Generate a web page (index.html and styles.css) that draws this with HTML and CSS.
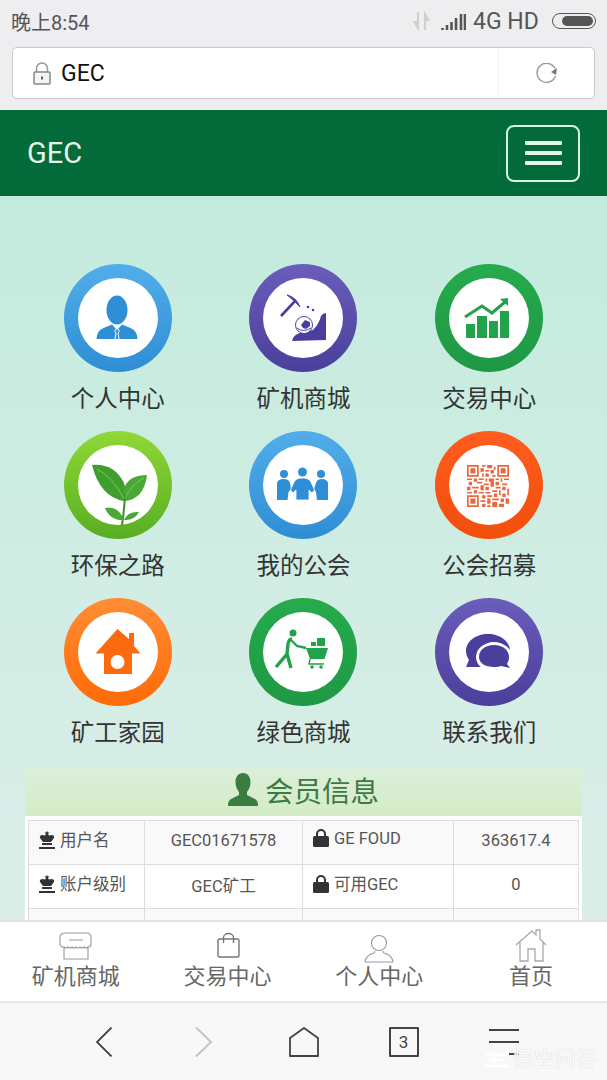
FILE: index.html
```html
<!DOCTYPE html>
<html lang="zh-CN">
<head>
  <meta charset="UTF-8">
  <meta name="viewport" content="width=device-width, initial-scale=1.0">
  <title>GEC</title>
  <link rel="stylesheet" href="styles.css">
</head>
<body>
  <div class="phone">
    <div class="status-bar">
      <span class="clock">晚上8:54</span>
      <div class="status-right">
        <svg class="ic-data" viewBox="0 0 17 20"><path d="M5 1v13M1.500 11l3.500 6 0-6zM12 19V6M15.500 9L12 3v6z" fill="#cfcfcf" stroke="#cfcfcf" stroke-width="2"/></svg>
        <svg class="ic-signal" viewBox="0 0 25 18"><path d="M1.500 16v2M6 13v5M10.500 10v8M15 6v12M20 2v16M24 2v16" stroke="#555" stroke-width="2.600" fill="none"/></svg>
        <span class="net">4G HD</span>
        <div class="battery"><div class="battery-fill"></div></div>
      </div>
    </div>

    <div class="address-wrap">
      <div class="address-bar">
        <div class="address-main">
          <svg class="ic-lock" viewBox="0 0 18 23"><path d="M3.500 10V6.500a5.500 5.500 0 0 1 11 0V10" fill="none" stroke="#999" stroke-width="1.500"/><rect x="1" y="10" width="16" height="12" rx="1" fill="#f4f4f4" stroke="#888" stroke-width="1.500"/><rect x="8" y="14.500" width="2" height="3" fill="#666"/></svg>
          <span class="address-text">GEC</span>
        </div>
        <div class="address-reload">
          <svg class="ic-reload" viewBox="0 0 23 21"><path d="M20 5.500A9.500 9.500 0 1 0 20.500 13" fill="none" stroke="#999" stroke-width="1.400"/><path d="M22 5l-1 7-5-3z" fill="#777"/></svg>
        </div>
      </div>
    </div>

    <header class="navbar">
      <span class="brand">GEC</span>
      <button class="toggler"><span></span><span></span><span></span></button>
    </header>

    <main class="content">
      <div class="menu-grid">
        <a class="menu-item">
          <div class="ring ring-blue"><div class="disc">
            <svg viewBox="0 0 80 80"><ellipse cx="39" cy="32" rx="10.500" ry="14.500" fill="#2f8fd6"/><path d="M18.500 61q0-8 7-11l8.500-3.500 5 5.500 5-5.500 8.500 3.500q7 3 7 11z" fill="#2f8fd6"/><path d="M39 50l-2.500 3 1.500 2-1 6M39 50l2.500 3-1.500 2 1 6" fill="none" stroke="#fff" stroke-width="1"/></svg>
          </div></div>
          <span class="menu-label">个人中心</span>
        </a>
        <a class="menu-item">
          <div class="ring ring-purple"><div class="disc">
            <svg viewBox="0 0 80 80"><path d="M18 38L33 22" stroke="#4b3f9e" stroke-width="2.600" fill="none"/><path d="M24 17q9 2 13 12-7-8-13-12z" fill="#4b3f9e" stroke="#4b3f9e"/><path d="M29 63q1-6 8-8L50 52q6-6 8-14 2-3 5-3v27z" fill="#4b3f9e"/><circle cx="41" cy="47" r="8.500" fill="#fff" stroke="#4b3f9e" stroke-width="1"/><path d="M38 47l4-5 5 2 0 4-4 3-3-1z" fill="#4b3f9e"/><path d="M34 50q6 5 14 0" fill="none" stroke="#4b3f9e" stroke-width="1"/><circle cx="45" cy="29" r="1.300" fill="#4b3f9e"/><circle cx="50" cy="32" r="1.300" fill="#4b3f9e"/></svg>
          </div></div>
          <span class="menu-label">矿机商城</span>
        </a>
        <a class="menu-item">
          <div class="ring ring-green"><div class="disc">
            <svg viewBox="0 0 80 80"><path d="M17 46h9v14h-9zM28 38h10v22H28zM40 43h9v17h-9zM51 33h9v27h-9z" fill="#22a24a"/><path d="M16 39l17-11 10 7 13-11" fill="none" stroke="#22a24a" stroke-width="3"/><path d="M51 21l8-1 0 8z" fill="#22a24a"/></svg>
          </div></div>
          <span class="menu-label">交易中心</span>
        </a>

        <a class="menu-item">
          <div class="ring ring-leaf"><div class="disc">
            <svg viewBox="0 0 80 80"><path d="M14 20q22-2 32 18 4 12 0 18Q22 52 14 20z" fill="#3f9e2e"/><path d="M69 30q-19 0-23 14l1 12q19-2 22-26z" fill="#4aa834"/><path d="M47 50q-1 18-3 30" fill="none" stroke="#3a8f28" stroke-width="2"/><path d="M27 63q13-3 19 12-14 1-19-12zM61 67q-11-1-15 8 10 1 15-8z" fill="#4aa834"/><path d="M19 24q16 8 27 30M66 33q-12 6-19 20" fill="none" stroke="#86cf5e" stroke-width=".8"/></svg>
          </div></div>
          <span class="menu-label">环保之路</span>
        </a>
        <a class="menu-item">
          <div class="ring ring-blue"><div class="disc">
            <svg viewBox="0 0 80 80"><circle cx="21" cy="29" r="4" fill="#2f8fd6"/><circle cx="39.500" cy="27" r="4.500" fill="#2f8fd6"/><circle cx="58" cy="29" r="4" fill="#2f8fd6"/><path d="M14 38q1-4 6.500-4t6.500 4l1 6-2.500 3-1 8H14z" fill="#2f8fd6"/><path d="M53 38q1-4 6-4t6 4v17H54l-1-8-2-3z" fill="#2f8fd6"/><path d="M31 37q2-4 8.500-4T48 37l3.500 8-2.500 3-3-3 0 10H33V45l-3 3-2.500-3z" fill="#2f8fd6" stroke="#fff" stroke-width=".8"/></svg>
          </div></div>
          <span class="menu-label">我的公会</span>
        </a>
        <a class="menu-item">
          <div class="ring ring-red"><div class="disc">
            <svg viewBox="0 0 25 25" class="qr"><path d="M0 0h7v7H0zM1 1v5h5V1zM2 2h3v3H2zM18 0h7v7h-7zM19 1v5h5V1zM20 2h3v3h-3zM0 18h7v7H0zM1 19v5h5v-5zM2 20h3v3H2z" fill-rule="evenodd"/><path d="M9 0h2v1H9zM12 0h3v2h-3zM16 1h1v2h-1zM8 2h2v2H8zM11 3h2v1h-2zM14 3h2v2h-2zM9 5h1v2H9zM11 5h2v2h-2zM15 6h2v1h-2zM0 8h3v1H0zM4 8h2v2H4zM7 8h3v1H7zM11 8h1v2h-1zM13 8h3v2h-3zM17 8h2v1h-2zM20 8h1v2h-1zM22 8h3v1h-3zM1 10h2v2H1zM6 10h3v1H6zM10 11h3v1h-3zM14 10h2v3h-2zM17 10h2v2h-2zM21 11h3v1h-3zM0 13h2v2H0zM3 13h4v1H3zM8 12h2v3H8zM11 13h2v2h-2zM17 13h3v1h-3zM21 13h2v2h-2zM4 15h2v2H4zM7 16h3v1H7zM11 16h3v1h-3zM15 15h3v1h-3zM19 15h1v3h-1zM24 14h1v4h-1zM0 16h3v1H0zM9 18h2v2H9zM12 18h3v1h-3zM16 17h2v2h-2zM21 17h2v2h-2zM8 21h3v1H8zM12 20h2v3h-2zM15 20h4v1h-4zM20 20h2v2h-2zM23 20h2v3h-2zM9 23h2v2H9zM15 22h3v3h-3zM19 23h3v2h-3zM12 24h2v1h-2z"/></svg>
          </div></div>
          <span class="menu-label">公会招募</span>
        </a>

        <a class="menu-item">
          <div class="ring ring-orange"><div class="disc">
            <svg viewBox="0 0 80 80"><path d="M39.500 17L51 27V21h5v13l6.500 7.500H54V62H26V41.500h-8.500z" fill="#fb6a0e"/><circle cx="39.500" cy="50" r="7" fill="#fff"/></svg>
          </div></div>
          <span class="menu-label">矿工家园</span>
        </a>
        <a class="menu-item">
          <div class="ring ring-green"><div class="disc">
            <svg viewBox="0 0 80 80"><circle cx="30" cy="21" r="3.500" fill="#22a24a"/><path d="M29 27q-3 0-4 5l-1 10-11 13M24 42l4 14" fill="none" stroke="#22a24a" stroke-width="3.400"/><path d="M28 28l6 6 9 2" fill="none" stroke="#22a24a" stroke-width="2.400"/><path d="M43 36h22l-3.500 11H47z" fill="#22a24a"/><path d="M47 47l-1 5h15" fill="none" stroke="#22a24a" stroke-width="1.500"/><circle cx="49" cy="55" r="1.800" fill="#22a24a"/><circle cx="58" cy="55" r="1.800" fill="#22a24a"/><path d="M48 30h5v4h-5zM54 26h8v8h-8z" fill="#22a24a"/></svg>
          </div></div>
          <span class="menu-label">绿色商城</span>
        </a>
        <a class="menu-item">
          <div class="ring ring-purple"><div class="disc">
            <svg viewBox="0 0 80 80"><path d="M39 22c13 0 22 8 22 17 0 9-9 16-22 16H17l3-7c-2-3-3-6-3-9 0-9 9-17 22-17z" fill="#4b3f9e"/><ellipse cx="45" cy="45" rx="18" ry="15" fill="#fff"/><path d="M45 33c9 0 15 5 15 12 0 3-1 5-2 7l3 4-9-2c-2 .6-4 1-7 1-9 0-15-4-15-10 0-7 6-12 15-12z" fill="#4b3f9e"/></svg>
          </div></div>
          <span class="menu-label">联系我们</span>
        </a>
      </div>

      <section class="member-panel">
        <h2 class="member-title">
          <svg class="ic-member" viewBox="0 0 30 33"><path d="M15 0c5 0 7.500 4 7.500 9 0 5-2 8-3.500 10v3l8 4c2 1 3 3 3 7H0c0-4 1-6 3-7l8-4v-3C9.500 17 7.500 14 7.500 9c0-5 2.500-9 7.500-9z" fill="#3a7d3f"/></svg>
          会员信息
        </h2>
        <table class="member-table">
          <colgroup>
            <col class="col-a"><col class="col-b"><col class="col-c"><col class="col-d">
          </colgroup>
          <tr>
            <td class="key"><svg class="ic-king" viewBox="0 0 16 18"><path d="M8 0l1 1.500h1.500L9 3l1 1.500c3-1.500 6 0 5 2.500l-3 4H4L1 7c-1-2.500 2-4 5-2.500L7 3 5.500 1.500H7zM3 12h10v2H3zM0 16h16v2H0z"/></svg>用户名</td>
            <td class="val">GEC01671578</td>
            <td class="key"><svg class="ic-padlock" viewBox="0 0 16 18"><path d="M4 8V5a4 4 0 0 1 8 0v3" fill="none" stroke="#333" stroke-width="2"/><rect y="7" width="16" height="11" rx="1.500"/></svg>GE FOUD</td>
            <td class="val">363617.4</td>
          </tr>
          <tr>
            <td class="key"><svg class="ic-king" viewBox="0 0 16 18"><path d="M8 0l1 1.500h1.500L9 3l1 1.500c3-1.500 6 0 5 2.500l-3 4H4L1 7c-1-2.500 2-4 5-2.500L7 3 5.500 1.500H7zM3 12h10v2H3zM0 16h16v2H0z"/></svg>账户级别</td>
            <td class="val">GEC矿工</td>
            <td class="key"><svg class="ic-padlock" viewBox="0 0 16 18"><path d="M4 8V5a4 4 0 0 1 8 0v3" fill="none" stroke="#333" stroke-width="2"/><rect y="7" width="16" height="11" rx="1.500"/></svg>可用GEC</td>
            <td class="val">0</td>
          </tr>
          <tr>
            <td class="key">&nbsp;</td><td></td><td></td><td></td>
          </tr>
        </table>
      </section>
    </main>

    <nav class="tab-bar">
      <a class="tab">
        <svg viewBox="0 0 40 34"><path d="M9 4h22q4 0 4 5v6q0 3-3 3-2 2-4 0-2 2-4 0-2.500 2-4 0-2 2-4 0-2 2-4 0-2 2-4 0-4 0-4-3V9q0-5 5-5zM8 18v12h24V18M13 11h14" fill="none" stroke="#999" stroke-width="1.100"/></svg>
        <span>矿机商城</span>
      </a>
      <a class="tab">
        <svg viewBox="0 0 40 34"><rect x="10" y="10" width="21" height="18" rx="1.500" fill="none" stroke="#777" stroke-width="1.400"/><path d="M15.500 14V8.500a5 4 0 0 1 10 0V14" fill="none" stroke="#777" stroke-width="1.400"/></svg>
        <span>交易中心</span>
      </a>
      <a class="tab">
        <svg viewBox="0 0 40 34"><circle cx="20" cy="14" r="7.500" fill="none" stroke="#999" stroke-width="1.100"/><path d="M6 33q1-7 9-9 1-.5 1-2M34 33q-1-7-9-9-1-.5-1-2M6 33h28" fill="none" stroke="#999" stroke-width="1.100"/></svg>
        <span>个人中心</span>
      </a>
      <a class="tab">
        <svg viewBox="0 0 40 34"><path d="M5 16L21 2l4 4V1h4v9l6 6M9 13v19h8V20h7v12h8V13" fill="none" stroke="#aaa" stroke-width="1.300"/></svg>
        <span>首页</span>
      </a>
    </nav>

    <div class="tool-bar">
      <div class="tool"><svg class="ic-tool" viewBox="0 0 30 30"><path d="M22.500 0.500L8 15l14.500 14.500" fill="none" stroke="#444" stroke-width="1.800"/></svg></div>
      <div class="tool"><svg class="ic-tool" viewBox="0 0 30 30"><path d="M7 0.500L22 15 7 29.500" fill="none" stroke="#c4c4c4" stroke-width="2"/></svg></div>
      <div class="tool"><svg class="ic-tool" viewBox="0 0 30 30"><path d="M15 1L29 11v18H1V11z" fill="none" stroke="#444" stroke-width="1.800" stroke-linejoin="round"/></svg></div>
      <div class="tool"><div class="tab-count">3</div></div>
      <div class="tool"><div class="tool-menu"><span></span><span></span><span class="short"></span></div></div>
      <div class="watermark">
        <svg class="ic-mark" viewBox="0 0 26 20"><path d="M2 6h22M5 11h16M1 17h24M9 2l3 15" fill="none" stroke="#fff" stroke-width="2.400"/></svg>
        悟空问答
      </div>
    </div>
  </div>
</body>
</html>
```

FILE: styles.css
```css
* {
  box-sizing: border-box;
}
body {
  margin: 0;
  background-color: #fff;
  font-family: Roboto, "Noto Sans CJK SC", sans-serif;
}
.phone {
  position: relative;
  display: flex;
  flex-direction: column;
  height: 1080px;
  overflow: hidden;
}

/* phone status bar */
.status-bar {
  display: flex;
  justify-content: space-between;
  align-items: center;
  flex: none;
  height: 42px;
  padding: 0 11px;
  background-color: #eeeef0;
  color: #555;
  font-size: 20px;
}
.status-right {
  display: flex;
  align-items: center;
}
.ic-data {
  width: 17px;
  height: 20px;
  margin-right: 11px;
}
.ic-signal {
  width: 25px;
  height: 18px;
  margin-right: 7px;
}
.net {
  width: 79px;
  font-size: 23px;
}
.battery {
  display: flex;
  justify-content: flex-end;
  width: 44px;
  height: 16px;
  padding: 2px;
  border: 1.500px solid #555;
  border-radius: 8px;
}
.battery-fill {
  width: 31px;
  background-color: #555;
  border-radius: 5px;
}

/* browser address bar */
.address-wrap {
  flex: none;
  height: 68px;
  padding: 5px 12px 0 12px;
  background-color: #eeeef0;
}
.address-bar {
  display: flex;
  height: 52px;
  background-color: white;
  border: 1.500px solid #c9c9c9;
  border-radius: 5px;
}
.address-main {
  display: flex;
  align-items: center;
  flex: 1;
  padding-left: 20px;
  border-right: 1px solid #f0f0f0;
}
.ic-lock {
  width: 18px;
  height: 23px;
  margin-right: 10px;
}
.address-text {
  color: #111;
  font-size: 23px;
}
.address-reload {
  display: flex;
  align-items: center;
  justify-content: center;
  width: 95px;
}
.ic-reload {
  width: 23px;
  height: 21px;
}

/* site navbar */
.navbar {
  display: flex;
  justify-content: space-between;
  align-items: center;
  flex: none;
  height: 86px;
  padding: 0 27px 0 27px;
  background-color: #036b3a;
}
.brand {
  color: #e6f6ec;
  font-size: 29px;
}
.toggler {
  display: flex;
  flex-direction: column;
  justify-content: center;
  align-items: center;
  gap: 6px;
  width: 74px;
  height: 57px;
  padding: 0;
  background: none;
  border: 2px solid #d9f1e2;
  border-radius: 8px;
}
.toggler span {
  width: 37px;
  height: 4px;
  background-color: #e6f6ec;
  border-radius: 1px;
}

/* main content */
.content {
  flex: 1;
  min-height: 0;
  overflow: hidden;
  padding: 68px 25px 0 25px;
  background: linear-gradient(#c3ebdd, #dceee9);
}
.menu-grid {
  display: grid;
  grid-template-columns: repeat(3, 1fr);
  grid-auto-rows: 167px;
}
.menu-item {
  display: flex;
  flex-direction: column;
  align-items: center;
}
.ring {
  width: 108px;
  height: 108px;
  padding: 14px;
  border-radius: 50%;
}
.ring-blue {
  background: linear-gradient(#52aeea, #2f8dd4);
}
.ring-purple {
  background: linear-gradient(#6b5dbb, #4a3f9b);
}
.ring-green {
  background: linear-gradient(#26ab4c, #1f9845);
}
.ring-leaf {
  background: linear-gradient(#8fd836, #58ae22);
}
.ring-red {
  background: linear-gradient(#ff5c1f, #f24e0c);
}
.ring-orange {
  background: linear-gradient(#ff8d35, #ff6a08);
}
.disc {
  width: 80px;
  height: 80px;
  background-color: white;
  border-radius: 50%;
}
.disc svg {
  display: block;
  width: 80px;
  height: 80px;
  overflow: visible;
}
.disc .qr {
  width: 42px;
  height: 42px;
  margin: 0;
  transform: translate(18px, 20px);
  fill: #e9683f;
}
.menu-label {
  margin-top: 10px;
  color: #333;
  font-size: 23.500px;
  line-height: 34px;
  white-space: nowrap;
}

/* member info */
.member-panel {
  margin-top: 2px;
  padding-bottom: 3px;
  background-color: white;
}
.member-title {
  display: flex;
  justify-content: center;
  align-items: center;
  gap: 7px;
  height: 49px;
  margin: 0 0 4px 0;
  padding-bottom: 4px;
  background: linear-gradient(#dcefdb, #d4ebc6);
  color: #3c7a45;
  font-size: 28.500px;
  font-weight: normal;
}
.ic-member {
  width: 30px;
  height: 33px;
}
.member-table {
  width: 550px;
  margin-left: 3px;
  border-collapse: collapse;
  table-layout: fixed;
  color: #555;
  font-size: 16.500px;
}
.col-a {
  width: 116px;
}
.col-b {
  width: 158px;
}
.col-c {
  width: 151px;
}
.col-d {
  width: 125px;
}
.member-table td {
  height: 44px;
  padding: 0 0 4px 0;
  border: 1.500px solid #ddd;
}
.member-table tr:nth-child(odd) td {
  background-color: #f9f9f9;
}
.member-table .key {
  padding: 0 0 8px 10px;
  white-space: nowrap;
}
.val {
  text-align: center;
}
.ic-king,
.ic-padlock {
  width: 16px;
  height: 18px;
  margin-right: 5px;
  vertical-align: -3px;
  fill: #333;
}

/* page tab bar */
.tab-bar {
  display: grid;
  grid-template-columns: repeat(4, 1fr);
  flex: none;
  height: 83px;
  padding-top: 7px;
  background-color: white;
  border-top: 2px solid #e2e2e2;
  border-bottom: 2px solid #e8e8e8;
}
.tab {
  display: flex;
  flex-direction: column;
  align-items: center;
  color: #666;
  font-size: 22px;
  line-height: 28px;
}
.tab svg {
  width: 40px;
  height: 34px;
}

/* browser toolbar */
.tool-bar {
  display: flex;
  justify-content: center;
  align-items: center;
  flex: none;
  height: 77px;
  background-color: #f8f8f8;
}
.tool {
  display: flex;
  justify-content: center;
  align-items: center;
  width: 100px;
}
.ic-tool {
  width: 30px;
  height: 30px;
}
.tab-count {
  width: 30px;
  height: 30px;
  border: 2px solid #444;
  border-radius: 1px;
  color: #444;
  font-size: 17px;
  line-height: 26px;
  text-align: center;
}
.tool-menu {
  display: flex;
  flex-direction: column;
  align-items: flex-end;
  gap: 10px;
  width: 30px;
}
.tool-menu span {
  width: 30px;
  height: 2px;
  background-color: #444;
}
.tool-menu .short {
  width: 10px;
}
.watermark {
  position: absolute;
  right: 10px;
  bottom: 9px;
  display: flex;
  align-items: center;
  gap: 3px;
  color: rgba(255, 255, 255, 0.95);
  font-size: 21px;
  line-height: 24px;
  text-shadow: 0 0 1px #c4c4c4;
}
.ic-mark {
  width: 26px;
  height: 20px;
}
```
